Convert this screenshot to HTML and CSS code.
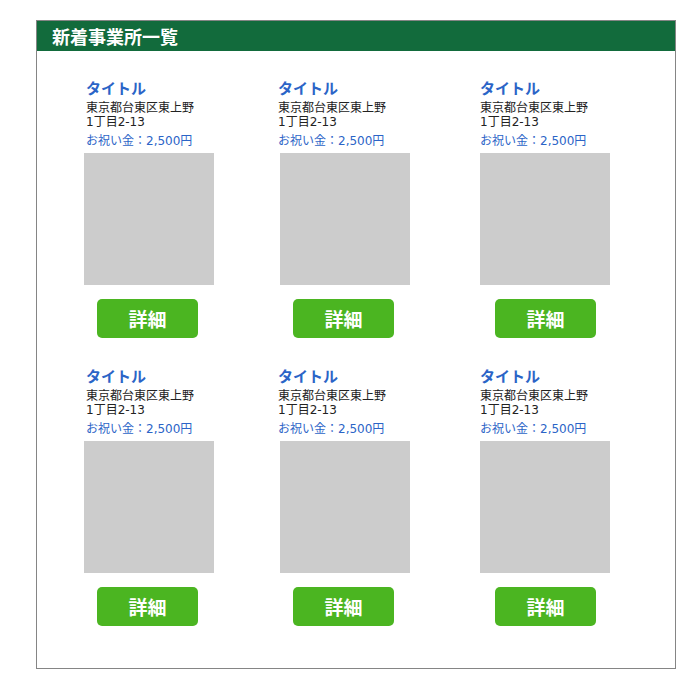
FILE: index.html
```html
<!DOCTYPE html>
<html lang="ja">
<head>
<meta charset="utf-8">
<title>新着事業所一覧</title>
<link rel="stylesheet" href="styles.css">
</head>
<body>
<section class="panel">
  <h2 class="panel-title">新着事業所一覧</h2>
  <div class="grid">
    <div class="card">
      <h3 class="card-title">タイトル</h3>
      <p class="card-address">東京都台東区東上野<br>1丁目2-13</p>
      <p class="card-money">お祝い金：2,500円</p>
      <div class="card-image"></div>
      <a class="card-button" href="#">詳細</a>
    </div>
    <div class="card">
      <h3 class="card-title">タイトル</h3>
      <p class="card-address">東京都台東区東上野<br>1丁目2-13</p>
      <p class="card-money">お祝い金：2,500円</p>
      <div class="card-image"></div>
      <a class="card-button" href="#">詳細</a>
    </div>
    <div class="card">
      <h3 class="card-title">タイトル</h3>
      <p class="card-address">東京都台東区東上野<br>1丁目2-13</p>
      <p class="card-money">お祝い金：2,500円</p>
      <div class="card-image"></div>
      <a class="card-button" href="#">詳細</a>
    </div>
    <div class="card">
      <h3 class="card-title">タイトル</h3>
      <p class="card-address">東京都台東区東上野<br>1丁目2-13</p>
      <p class="card-money">お祝い金：2,500円</p>
      <div class="card-image"></div>
      <a class="card-button" href="#">詳細</a>
    </div>
    <div class="card">
      <h3 class="card-title">タイトル</h3>
      <p class="card-address">東京都台東区東上野<br>1丁目2-13</p>
      <p class="card-money">お祝い金：2,500円</p>
      <div class="card-image"></div>
      <a class="card-button" href="#">詳細</a>
    </div>
    <div class="card">
      <h3 class="card-title">タイトル</h3>
      <p class="card-address">東京都台東区東上野<br>1丁目2-13</p>
      <p class="card-money">お祝い金：2,500円</p>
      <div class="card-image"></div>
      <a class="card-button" href="#">詳細</a>
    </div>
  </div>
</section>
</body>
</html>
```
FILE: styles.css
```css
* { box-sizing: border-box; }
body {
  margin: 0;
  background: #fff;
  font-family: "Noto Sans CJK JP", "Noto Sans", sans-serif;
}
.panel {
  margin: 20px 0 0 36px;
  width: 640px;
  height: 649px;
  border: 1px solid #858585;
}
.panel-title {
  margin: 0;
  height: 30px;
  padding-left: 15px;
  background: #126b3c;
  color: #fff;
  font-size: 18px;
  font-weight: bold;
  line-height: 30px;
}
.grid {
  display: grid;
  grid-template-columns: 196px 200px 130px;
  row-gap: 29px;
  padding: 28px 0 0 47px;
}
.card {
  display: flex;
  flex-direction: column;
  align-items: flex-start;
}
.card-title,
.card-address,
.card-money {
  position: relative;
}
.card:nth-child(3n+1) .card-title,
.card:nth-child(3n+1) .card-address,
.card:nth-child(3n+1) .card-money {
  margin-left: 2px;
}
.card:nth-child(3n+2) .card-title,
.card:nth-child(3n+2) .card-address,
.card:nth-child(3n+2) .card-money {
  margin-left: -2px;
}
.card-title {
  margin-top: 0;
  margin-bottom: 0;
  font-size: 15px;
  line-height: 18px;
  font-weight: bold;
  color: #2b64c7;
}
.card-address {
  margin-top: 4px;
  margin-bottom: 0;
  font-family: "DejaVu Sans", "Noto Sans CJK JP", sans-serif;
  font-size: 12px;
  line-height: 14px;
  color: #222;
}
.card-money {
  margin-top: 5px;
  margin-bottom: 0;
  font-family: "DejaVu Sans", "Noto Sans CJK JP", sans-serif;
  font-size: 12px;
  line-height: 14px;
  color: #2b64c7;
}
.card-image {
  margin-top: 5px;
  width: 130px;
  height: 132px;
  background: #cccccc;
}
.card-button {
  margin: 14px 0 0 13px;
  width: 101px;
  height: 39px;
  border-radius: 5px;
  background: #4bb521;
  color: #fff;
  font-size: 19px;
  font-weight: bold;
  line-height: 39px;
  text-align: center;
  text-decoration: none;
}
.card:nth-child(3n) .card-button {
  margin-left: 15px;
}
```
